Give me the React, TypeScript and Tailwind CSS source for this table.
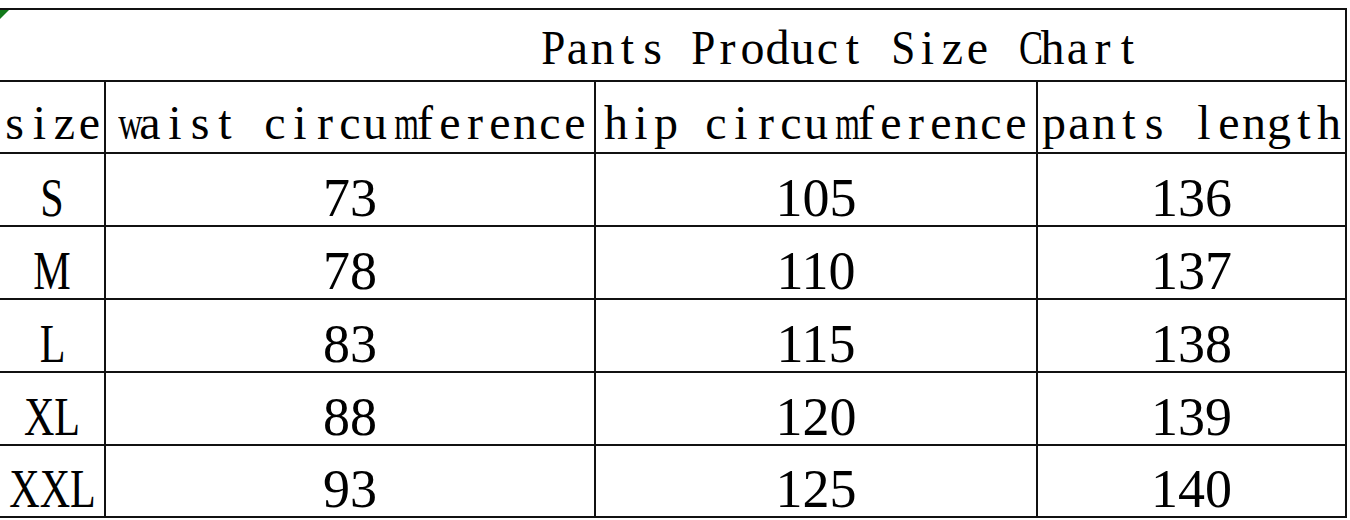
const rows = [
  { size: "S", waist: 73, hip: 105, length: 136 },
  { size: "M", waist: 78, hip: 110, length: 137 },
  { size: "L", waist: 83, hip: 115, length: 138 },
  { size: "XL", waist: 88, hip: 120, length: 139 },
  { size: "XXL", waist: 93, hip: 125, length: 140 },
];

const headers = ["size", "waist circumference", "hip circumference", "pants length"];

// glyphs wider than the 25px half-width cell get squeezed
const squeeze: Record<string, string> = {
  m: "scale-x-[0.66]",
  w: "scale-x-[0.7]",
  C: "scale-x-[0.75]",
  P: "scale-x-[0.9]",
  S: "scale-x-[0.9]",
};

const serif = "font-['Liberation_Serif',serif] leading-none";

// half-width serif text, every character in a 25px box like SimSun
function Mono({ text }: { text: string }) {
  return (
    <span className={`${serif} text-[48px] whitespace-nowrap flex`}>
      {text.split("").map((c, i) => (
        <span key={i} className="inline-block w-[25px] text-center">
          <span className={`inline-block ${squeeze[c] ?? ""}`}>{c === " " ? "\u00a0" : c}</span>
        </span>
      ))}
    </span>
  );
}

export default function App() {
  return (
    <div className="w-[1350px] h-[520px] bg-white pt-[8px] text-black">
      <div className="grid grid-cols-[104px_488px_440px_307px] grid-rows-[70px_70px_71px_71px_71px_71px_70px] gap-[2px] bg-[#111] pt-[2px] pb-[2px] pr-[2px] w-[1347px]">
        {/* title row, merged across all columns */}
        <div className="relative col-span-4 bg-white flex items-end pl-[540px] pb-[8px]">
          <svg className="absolute left-0 top-0" width="9" height="9" viewBox="0 0 9 9">
            <polygon points="0,0 9,0 0,9" fill="#13791b" />
          </svg>
          <Mono text="Pants Product Size Chart" />
        </div>

        {headers.map((h) => (
          <div key={h} className="bg-white flex items-end justify-center pb-[5px]">
            <Mono text={h} />
          </div>
        ))}

        {rows.map((r) => (
          <>
            <div key={r.size} className="bg-white flex items-end justify-center">
              <span className={`${serif} text-[54px] inline-block scale-x-[0.78] whitespace-nowrap`}>{r.size}</span>
            </div>
            <div className="bg-white flex items-end justify-center">
              <span className={`${serif} text-[54px]`}>{r.waist}</span>
            </div>
            <div className="bg-white flex items-end justify-center">
              <span className={`${serif} text-[54px]`}>{r.hip}</span>
            </div>
            <div className="bg-white flex items-end justify-center">
              <span className={`${serif} text-[54px]`}>{r.length}</span>
            </div>
          </>
        ))}
      </div>
    </div>
  );
}
